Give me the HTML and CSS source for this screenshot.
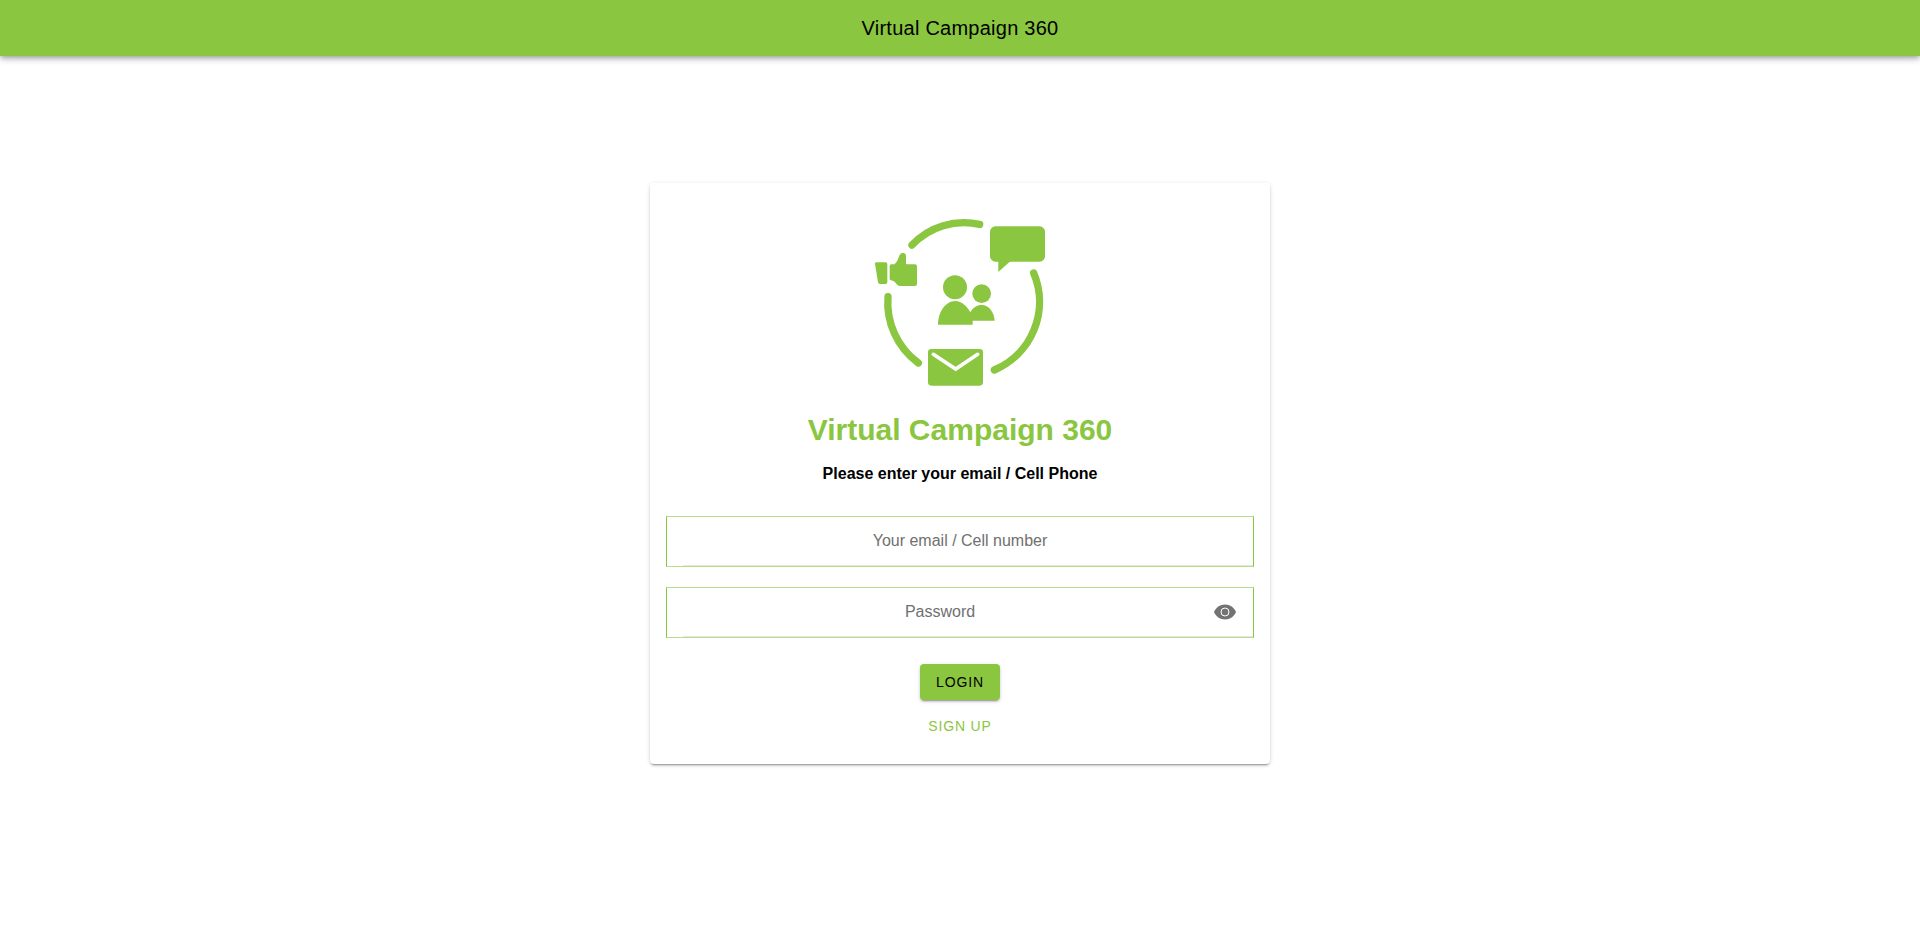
FILE: index.html
```html
<!DOCTYPE html>
<html lang="en">
<head>
    <meta charset="UTF-8">
    <meta name="viewport" content="width=device-width, initial-scale=1">
    <title>Virtual Campaign 360</title>
    <link rel="stylesheet" href="styles.css">
</head>
<body>
<header class="toolbar">
    <div class="toolbar-title">Virtual Campaign 360</div>
</header>
<main class="content">
    <form class="card">
        <!-- logo -->
        <svg class="logo" viewBox="0 0 600 600" aria-hidden="true">
            <g class="ring">
                <path d="M156 135A215 215 0 0 1 359 73"/>
                <path d="M521 219A222 222 0 0 1 403 510"/>
                <path d="M84 290A225 225 0 0 0 175 489"/>
            </g>
            <rect x="390" y="79" width="165" height="106" rx="16"/>
            <path d="M415 180V216L451 184Z"/>
            <!-- thumb -->
            <path d="M49 187H77Q82 187 82 192V247Q82 252 77 252H60Q55 252 54 247L45 192Q44 187 49 187Z"/>
            <path d="M94 193H103C110 188 114 178 119 165Q122 158 130 159Q138 160 138 168V190Q138 193 142 193H165Q171 193 171 199V252Q171 258 165 258H119C113 258 106 246 100 243Q89 241 89 237V199Q89 193 94 193Z"/>
            <!-- people -->
            <circle cx="285" cy="262" r="36"/>
            <circle cx="365" cy="281" r="28"/>
            <path d="M234 374C235 336 256 303 286 303C305 303 321 319 331 337C338 323 351 315 365 315C387 315 403 338 404 362H338V374Z"/>
            <!-- envelope -->
            <rect x="204" y="447" width="165" height="110" rx="10"/>
            <path class="flap" d="M220 463L287 507L353 463"/>
        </svg>
        <h1 class="card-title">Virtual Campaign 360</h1>
        <p class="hint">Please enter your email / Cell Phone</p>
        <div class="item">
            <div class="item-inner">
                <input class="field" type="text" placeholder="Your email / Cell number" aria-label="Your email / Cell number">
            </div>
        </div>
        <div class="item">
            <div class="item-inner">
                <input class="field" type="password" placeholder="Password" aria-label="Password">
                <button class="eye" type="button" aria-label="Show password">
                    <svg viewBox="0 0 24 24" aria-hidden="true">
                        <path d="M12 4.500C7 4.500 2.730 7.610 1 12c1.730 4.390 6 7.500 11 7.500s9.270-3.110 11-7.500c-1.730-4.390-6-7.500-11-7.500z"/>
                        <circle class="pupil" cx="12" cy="12" r="4"/>
                    </svg>
                </button>
            </div>
        </div>
        <button class="btn btn-solid" type="submit">Login</button>
        <button class="btn btn-clear" type="button">Sign up</button>
    </form>
</main>
</body>
</html>
```
FILE: styles.css
```css
* {
    box-sizing: border-box;
}

body {
    margin: 0;
    background-color: #fff;
    color: #000;
    font-family: "Liberation Sans", Arial, sans-serif;
    font-size: 16px;
}

/* top bar */
.toolbar {
    display: flex;
    align-items: center;
    justify-content: center;
    min-height: 56px;
    background-color: #8ac63f;
    box-shadow: 0 2px 4px -1px rgba(0, 0, 0, .2), 0 4px 5px 0 rgba(0, 0, 0, .14), 0 1px 10px 0 rgba(0, 0, 0, .12);
}
.toolbar-title {
    font-size: 20px;
    letter-spacing: .0125em;
}

/* login card */
.content {
    padding: 127px 16px 32px;
}
.card {
    display: flex;
    flex-direction: column;
    align-items: center;
    max-width: 620px;
    margin: 0 auto;
    padding: 17px 16px 20px;
    border-radius: 4px;
    box-shadow: 0 3px 1px -2px rgba(0, 0, 0, .2), 0 2px 2px 0 rgba(0, 0, 0, .14), 0 1px 5px 0 rgba(0, 0, 0, .12);
}
.logo {
    width: 200px;
    height: 200px;
    fill: #8ac63f;
}
.ring {
    fill: none;
    stroke: #8ac63f;
    stroke-width: 22;
    stroke-linecap: round;
}
.flap {
    fill: none;
    stroke: #fff;
    stroke-width: 11;
    stroke-linecap: round;
}
.card-title {
    margin: 12px 0 16px;
    color: #8ac63f;
    font-size: 30px;
    line-height: 36px;
}
.hint {
    margin: 0 0 32px;
    font-weight: bold;
    line-height: 20px;
}

/* inputs */
.item {
    width: 100%;
    margin-bottom: 20px;
    padding-left: 16px;
    border: 1px solid #8ac63f;
    border-top-color: #b9dd8c;
    border-bottom-color: #b9dd8c;
}
.item-inner {
    display: flex;
    align-items: center;
    height: 49px;
    padding-right: 16px;
    border-bottom: 1px solid #e4e8df;
}
.field {
    flex: 1;
    min-width: 0;
    height: 100%;
    padding: 0;
    border: 0;
    outline: 0;
    background: none;
    font: inherit;
    text-align: center;
}
.field::placeholder {
    color: #707070;
    opacity: 1;
}
.eye {
    width: 24px;
    height: 24px;
    margin-left: 16px;
    padding: 0;
    border: 0;
    background: none;
    cursor: pointer;
}
.eye svg {
    display: block;
    fill: #737373;
}
.pupil {
    stroke: #fff;
    stroke-width: 1;
}

/* buttons */
.btn {
    height: 36px;
    padding: 0 16px;
    border: 0;
    border-radius: 4px;
    font-family: inherit;
    font-size: 14px;
    letter-spacing: .06em;
    text-transform: uppercase;
    cursor: pointer;
}
.btn-solid {
    margin: 6px 0 8px;
    background-color: #8ac63f;
    color: #000;
    box-shadow: 0 3px 1px -2px rgba(0, 0, 0, .2), 0 2px 2px 0 rgba(0, 0, 0, .14), 0 1px 5px 0 rgba(0, 0, 0, .12);
}
.btn-clear {
    background: none;
    color: #8ac63f;
}
```
